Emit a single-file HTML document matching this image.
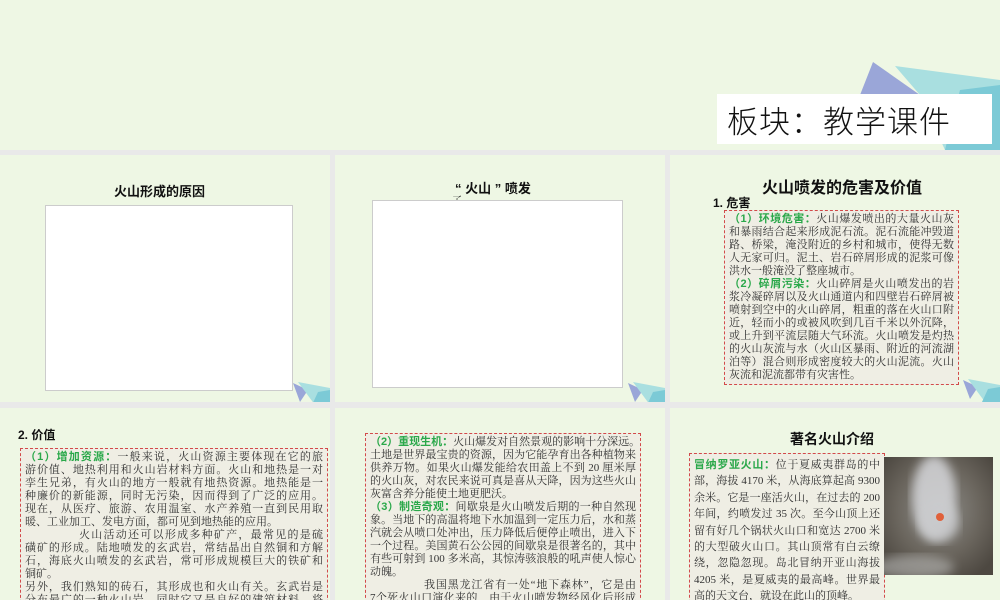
<!DOCTYPE html>
<html><head><meta charset="utf-8"><style>
*{margin:0;padding:0;box-sizing:border-box}
body{width:1000px;height:600px;background:#e9e9e9;position:relative;overflow:hidden;font-family:"Liberation Serif","Noto Serif CJK SC",serif;color:#222}
.p{position:absolute;background:#eef7e4;overflow:hidden}
.abs{position:absolute}
.t{position:absolute;font-family:"Liberation Sans","Noto Sans CJK SC",sans-serif;font-weight:bold;white-space:nowrap;color:#111}
.box{position:absolute;border:1.5px dashed #d24a4a;background:#efeee4;font-size:11px;line-height:13px;padding:2px 4px;overflow:hidden;color:#333}
.box div{white-space:nowrap;text-align:justify;text-align-last:justify;height:13px}
.box div.n{text-align-last:left}
.g{color:#2aa84a;font-weight:bold;font-family:"Liberation Sans","Noto Sans CJK SC",sans-serif}
.wb{position:absolute;background:#fff;border:1px solid #ccc}
.r3 div{height:16.4px;line-height:16.4px}
</style></head><body>
<div class="p" style="left:0;top:0;width:1000px;height:150px">
<svg class="abs" style="left:840px;top:0" width="160" height="150">
<polygon points="33,62 20,95 80,95" fill="#9aa6d8"/>
<polygon points="55,66 160,80 160,150 105,150 80,95" fill="#a9dfe0"/>
<polygon points="120,90 160,85 160,150 105,150" fill="#7ccad6"/>
</svg>
<div class="abs" style="left:717px;top:94px;width:275px;height:50px;background:#fff"></div>
<div class="abs" style="left:727px;top:97px;font-size:31px;font-family:'Noto Sans CJK SC',sans-serif;font-weight:300;color:#111;letter-spacing:1px">板块：教学课件</div>
</div>

<div class="p" style="left:0;top:155px;width:330px;height:247px">
<div class="t" style="left:114px;top:26px;font-size:13px">火山形成的原因</div>
<div class="wb" style="left:45px;top:50px;width:248px;height:186px"></div>
<svg class="abs" style="left:290px;top:225px" width="40" height="25"><polygon points="3,3 18,10 10,22" fill="#9aa6d8"/><polygon points="8,2 40,8 40,25 25,25" fill="#a9dfe0"/><polygon points="28,12 40,10 40,25 22,25" fill="#7ccad6"/></svg>
</div>
<div class="p" style="left:335px;top:155px;width:330px;height:247px">
<div class="t" style="left:120px;top:23px;font-size:13px">“ 火山 ” 喷发</div>
<div class="abs" style="left:117px;top:37px;font-size:10px">了</div>
<div class="wb" style="left:37px;top:45px;width:251px;height:188px"></div>
<svg class="abs" style="left:290px;top:225px" width="40" height="25"><polygon points="3,3 18,10 10,22" fill="#9aa6d8"/><polygon points="8,2 40,8 40,25 25,25" fill="#a9dfe0"/><polygon points="28,12 40,10 40,25 22,25" fill="#7ccad6"/></svg>
</div>
<div class="p" style="left:670px;top:155px;width:330px;height:247px">
<div class="t" style="left:92px;top:19px;font-size:16px">火山喷发的危害及价值</div>
<div class="t" style="left:43px;top:39px;font-size:12px">1. 危害</div>
<div class="box" style="left:54px;top:55px;width:235px;height:175px">
<div><span class="g">（1）环境危害：</span>火山爆发喷出的大量火山灰</div>
<div>和暴雨结合起来形成泥石流。泥石流能冲毁道</div>
<div>路、桥梁，淹没附近的乡村和城市，使得无数</div>
<div>人无家可归。泥土、岩石碎屑形成的泥浆可像</div>
<div class="n">洪水一般淹没了整座城市。</div>
<div><span class="g">（2）碎屑污染：</span>火山碎屑是火山喷发出的岩</div>
<div>浆冷凝碎屑以及火山通道内和四壁岩石碎屑被</div>
<div>喷射到空中的火山碎屑，粗重的落在火山口附</div>
<div>近，轻而小的或被风吹到几百千米以外沉降，</div>
<div>或上升到平流层随大气环流。火山喷发是灼热</div>
<div>的火山灰流与水（火山区暴雨、附近的河流湖</div>
<div>泊等）混合则形成密度较大的火山泥流。火山</div>
<div class="n">灰流和泥流都带有灾害性。</div>
</div>
<svg class="abs" style="left:290px;top:222px" width="40" height="25"><polygon points="3,3 18,10 10,22" fill="#9aa6d8"/><polygon points="8,2 40,8 40,25 25,25" fill="#a9dfe0"/><polygon points="28,12 40,10 40,25 22,25" fill="#7ccad6"/></svg>
</div>

<div class="p" style="left:0;top:408px;width:330px;height:192px">
<div class="t" style="left:18px;top:18px;font-size:12px">2. 价值</div>
<div class="box" style="left:20px;top:40px;width:308px;height:160px">
<div><span class="g">（1）增加资源：</span>一般来说，火山资源主要体现在它的旅</div>
<div>游价值、地热利用和火山岩材料方面。火山和地热是一对</div>
<div>孪生兄弟，有火山的地方一般就有地热资源。地热能是一</div>
<div>种廉价的新能源，同时无污染，因而得到了广泛的应用。</div>
<div>现在，从医疗、旅游、农用温室、水产养殖一直到民用取</div>
<div class="n">暖、工业加工、发电方面，都可见到地热能的应用。</div>
<div style="padding-left:54px">火山活动还可以形成多种矿产，最常见的是硫</div>
<div>磺矿的形成。陆地喷发的玄武岩，常结晶出自然铜和方解</div>
<div>石，海底火山喷发的玄武岩，常可形成规模巨大的铁矿和</div>
<div class="n">铜矿。</div>
<div>另外，我们熟知的砖石，其形成也和火山有关。玄武岩是</div>
<div>分布最广的一种火山岩，同时它又是良好的建筑材料，将</div>
</div>
</div>
<div class="p" style="left:335px;top:408px;width:330px;height:192px">
<div class="box" style="left:30px;top:25px;width:276px;height:175px">
<div><span class="g">（2）重现生机：</span>火山爆发对自然景观的影响十分深远。</div>
<div>土地是世界最宝贵的资源，因为它能孕育出各种植物来</div>
<div>供养万物。如果火山爆发能给农田盖上不到 20 厘米厚</div>
<div>的火山灰，对农民来说可真是喜从天降，因为这些火山</div>
<div class="n">灰富含养分能使土地更肥沃。</div>
<div><span class="g">（3）制造奇观：</span>间歇泉是火山喷发后期的一种自然现</div>
<div>象。当地下的高温将地下水加温到一定压力后，水和蒸</div>
<div>汽就会从喷口处冲出，压力降低后便停止喷出，进入下</div>
<div>一个过程。美国黄石公公园的间歇泉是很著名的，其中</div>
<div>有些可射到 100 多米高，其惊涛骇浪般的吼声使人惊心</div>
<div class="n">动魄。</div>
<div style="padding-left:54px">我国黑龙江省有一处“地下森林”，它是由</div>
<div>7个死火山口演化来的，由于火山喷发物经风化后形成</div>
</div>
</div>
<div class="p" style="left:670px;top:408px;width:330px;height:192px">
<div class="t" style="left:120px;top:21px;font-size:14px">著名火山介绍</div>
<div class="box r3" style="left:19px;top:45px;width:196px;height:160px;padding:3px 4px">
<div><span class="g">冒纳罗亚火山：</span>位于夏威夷群岛的中</div>
<div>部，海拔 4170 米，从海底算起高 9300</div>
<div>余米。它是一座活火山，在过去的 200</div>
<div>年间，约喷发过 35 次。至今山顶上还</div>
<div>留有好几个锅状火山口和宽达 2700 米</div>
<div>的大型破火山口。其山顶常有白云缭</div>
<div>绕，忽隐忽现。岛北冒纳开亚山海拔</div>
<div>4205 米，是夏威夷的最高峰。世界最</div>
<div class="n">高的天文台，就设在此山的顶峰。</div>
</div>
<svg class="abs" style="left:214px;top:49px" width="109" height="118">
<defs><radialGradient id="r" cx="50%" cy="45%" r="65%"><stop offset="0" stop-color="#8f8e8a"/><stop offset="0.6" stop-color="#6a655d"/><stop offset="1" stop-color="#4d4841"/></radialGradient>
<filter id="b"><feGaussianBlur stdDeviation="5"/></filter></defs>
<rect width="109" height="118" fill="url(#r)"/>
<ellipse cx="50" cy="40" rx="22" ry="42" fill="#d6d7da" opacity="0.85" filter="url(#b)"/>
<ellipse cx="55" cy="65" rx="20" ry="20" fill="#c9cacc" opacity="0.8" filter="url(#b)"/>
<ellipse cx="30" cy="110" rx="40" ry="12" fill="#b8b8b6" opacity="0.6" filter="url(#b)"/>
<circle cx="56" cy="60" r="4" fill="#e0603a"/>
</svg>
</div>
</body></html>
